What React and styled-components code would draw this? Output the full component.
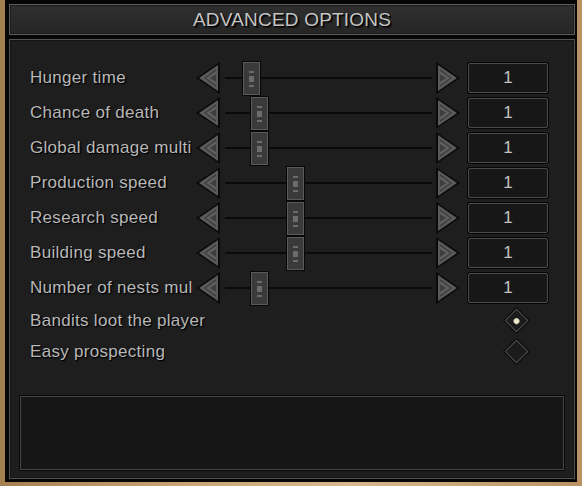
import React from 'react';
import styled, { createGlobalStyle } from 'styled-components';

const GlobalStyle = createGlobalStyle`
  html, body {
    margin: 0;
    padding: 0;
    background: #b8946a;
  }
  * { box-sizing: border-box; }
`;

const Page = styled.div`
  width: 582px;
  height: 486px;
  padding: 0 5px 4px 5px;
  background: linear-gradient(90deg, #a5804f 0%, #c7a274 30%, #d6b98f 60%, #b99264 100%);
  font-family: "Liberation Sans", Arial, sans-serif;
`;

const Frame = styled.div`
  height: 482px;
  background: #060606;
  padding: 4px 2px 3px 4px;
  display: flex;
  flex-direction: column;
  gap: 4px;
`;

const TitleBar = styled.div`
  height: 31px;
  border: 1px solid #5c5c5c;
  box-shadow: inset 0 0 0 1px #1c1c1c;
  background: linear-gradient(180deg, #2f2f2f 0%, #2a2a2a 55%, #252525 100%);
  display: flex;
  align-items: center;
  justify-content: center;
  h1 {
    margin: 0;
    font-size: 19px;
    font-weight: 400;
    color: #c4c4c4;
    letter-spacing: 0.2px;
    text-shadow: 1px 1px 0 #000, 2px 2px 1px rgba(0,0,0,0.6);
  }
`;

const Content = styled.div`
  flex: 1;
  border: 1px solid #545454;
  box-shadow: inset 0 0 0 1px #141414;
  background: #1e1e1e;
  padding: 22px 10px 8px 10px;
  display: flex;
  flex-direction: column;
`;

const OptionList = styled.div`
  display: flex;
  flex-direction: column;
  padding: 0 16px 0 10px;
`;

const SliderRow = styled.div`
  height: 30px;
  margin-bottom: 5px;
  display: grid;
  grid-template-columns: 166px 24px 216px 24px 88px;
  align-items: center;
`;

const ToggleRow = styled.div`
  height: 31px;
  display: flex;
  align-items: center;
  justify-content: space-between;
  &:nth-child(8) { margin-top: -2px; }
`;

const Label = styled.span`
  max-width: 162px;
  font-size: 17px;
  letter-spacing: 0.3px;
  color: #b8b8b8;
  text-shadow: 1px 1px 0 #000, 1px 1px 2px rgba(0,0,0,0.7);
  white-space: nowrap;
  overflow: hidden;
  line-height: 30px;
`;

const ToggleLabel = styled(Label)`
  max-width: none;
`;

const ArrowSvg = styled.svg`
  display: block;
  width: 24px;
  height: 32px;
  transform: ${p => (p.$right ? 'scaleX(-1)' : 'none')};
`;

const Track = styled.div`
  position: relative;
  height: 30px;
  &::before {
    content: '';
    position: absolute;
    left: 5px;
    right: 4px;
    top: 14px;
    height: 2px;
    background: #0a0a0a;
  }
`;

const Thumb = styled.div`
  position: absolute;
  top: -1px;
  width: 17px;
  height: 33px;
  background: #3a3a3a;
  border: 1px solid #5a5a5a;
  box-shadow: 0 0 0 1px #080808;
  display: flex;
  flex-direction: column;
  align-items: center;
  justify-content: center;
  gap: 3px;
`;

const Mark = styled.i`
  display: block;
  width: 5px;
  height: ${p => (p.$big ? '6px' : '2px')};
  background: #6c6c6c;
`;

const ValueBox = styled.div`
  margin-left: 8px;
  width: 80px;
  height: 30px;
  background: #171717;
  border: 1px solid #4a4a4a;
  border-radius: 2px;
  box-shadow: 0 0 0 1px #050505;
  display: flex;
  align-items: center;
  justify-content: center;
  font-size: 17px;
  color: #c2c2c2;
`;

const DiamondSlot = styled.div`
  width: 25px;
  height: 25px;
  margin-right: 19px;
  display: flex;
  align-items: center;
  justify-content: center;
`;

const Diamond = styled.div`
  width: 17px;
  height: 17px;
  transform: rotate(45deg);
  background: #1b1b1b;
  border: 1px solid #4e4e4e;
  box-shadow: 0 0 0 1px #050505;
  display: flex;
  align-items: center;
  justify-content: center;
  &::after {
    content: '';
    display: ${p => (p.$checked ? 'block' : 'none')};
    width: 6px;
    height: 6px;
    border-radius: 50%;
    background: radial-gradient(circle, #f2ecd0 30%, #b8b297 100%);
  }
`;

const InfoBox = styled.div`
  margin-top: auto;
  height: 74px;
  background: #161616;
  border: 1px solid #444;
  box-shadow: 0 0 0 1px #080808;
`;

const Arrow = ({ right }) => (
  <ArrowSvg $right={right} viewBox="0 0 24 32">
    <polygon points="24,0 0,16 24,32" fill="#0a0a0a" />
    <polygon points="22,3 3,16 22,29" fill="#5a5a5a" />
    <polygon points="20,7 8,16 20,25" fill="#3e3e3e" />
    <polygon points="20,9 10,16 20,23 20,20 14,16 20,12" fill="#5f5f5f" />
  </ArrowSvg>
);

const sliders = [
  { label: 'Hunger time', pos: 23 },
  { label: 'Chance of death', pos: 31 },
  { label: 'Global damage multiplier', pos: 31 },
  { label: 'Production speed', pos: 67 },
  { label: 'Research speed', pos: 67 },
  { label: 'Building speed', pos: 67 },
  { label: 'Number of nests multiplier', pos: 31 },
];

const toggles = [
  { label: 'Bandits loot the player', checked: true },
  { label: 'Easy prospecting', checked: false },
];

export default function App() {
  return (
    <>
      <GlobalStyle />
      <Page>
        <Frame>
          <TitleBar>
            <h1>ADVANCED OPTIONS</h1>
          </TitleBar>
          <Content>
            <OptionList>
              {sliders.map(s => (
                <SliderRow key={s.label}>
                  <Label>{s.label}</Label>
                  <Arrow />
                  <Track>
                    <Thumb style={{ left: s.pos }}>
                      <Mark />
                      <Mark $big />
                      <Mark />
                    </Thumb>
                  </Track>
                  <Arrow right />
                  <ValueBox>1</ValueBox>
                </SliderRow>
              ))}
              {toggles.map(t => (
                <ToggleRow key={t.label}>
                  <ToggleLabel>{t.label}</ToggleLabel>
                  <DiamondSlot>
                    <Diamond $checked={t.checked} />
                  </DiamondSlot>
                </ToggleRow>
              ))}
            </OptionList>
            <InfoBox />
          </Content>
        </Frame>
      </Page>
    </>
  );
}
